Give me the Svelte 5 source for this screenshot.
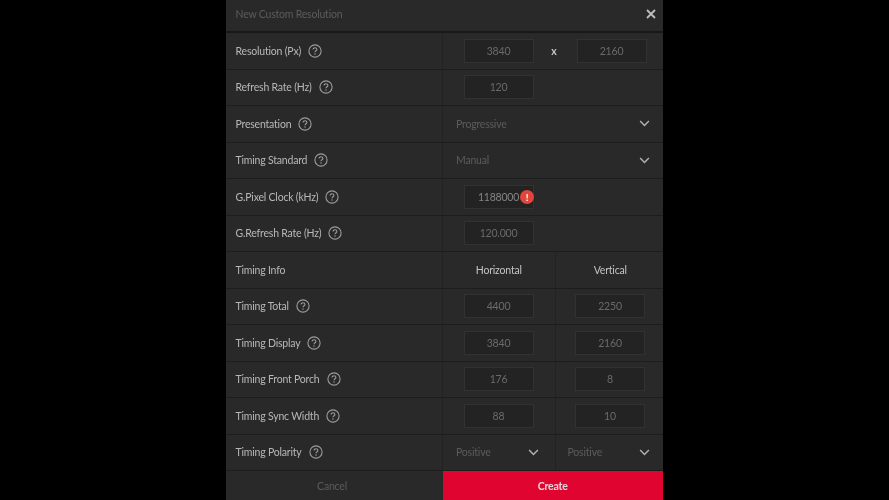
<script>
  const rows = [
    { label: 'Resolution (Px)', help: true, cols: 'res', a: '3840', b: '2160' },
    { label: 'Refresh Rate (Hz)', help: true, cols: 'one', a: '120' },
    { label: 'Presentation', help: true, cols: 'sel', a: 'Progressive' },
    { label: 'Timing Standard', help: true, cols: 'sel', a: 'Manual' },
    { label: 'G.Pixel Clock (kHz)', help: true, cols: 'one', a: '1188000', err: true },
    { label: 'G.Refresh Rate (Hz)', help: true, cols: 'one', a: '120.000' },
    { label: 'Timing Info', cols: 'head', a: 'Horizontal', b: 'Vertical' },
    { label: 'Timing Total', help: true, cols: 'two', a: '4400', b: '2250' },
    { label: 'Timing Display', help: true, cols: 'two', a: '3840', b: '2160' },
    { label: 'Timing Front Porch', help: true, cols: 'two', a: '176', b: '8' },
    { label: 'Timing Sync Width', help: true, cols: 'two', a: '88', b: '10' },
    { label: 'Timing Polarity', help: true, cols: 'two-sel', a: 'Positive', b: 'Positive' }
  ];
</script>

{#snippet chevron()}
  <svg class="chev" viewBox="0 0 12 8" width="11" height="7"><path d="M1 1.2 6 6.2 11 1.2" fill="none" stroke="#b4b4b4" stroke-width="1.6"/></svg>
{/snippet}

{#snippet help()}
  <svg class="help" viewBox="0 0 14 14" width="14" height="14">
    <circle cx="7" cy="7" r="6.1" fill="none" stroke="#9c9c9c" stroke-width="1.1"/>
    <path d="M5.1 5.5C5.1 4.4 6 3.8 7 3.8S8.9 4.4 8.9 5.4C8.9 6.7 7 6.8 7 8.3" fill="none" stroke="#9c9c9c" stroke-width="1.1"/>
    <circle cx="7" cy="10.1" r=".75" fill="#9c9c9c"/>
  </svg>
{/snippet}

<div class="stage">
  <div class="panel">
    <header class="title">
      <span>New Custom Resolution</span>
      <svg viewBox="0 0 10 10" width="10" height="10"><path d="M1 1 9 9M9 1 1 9" stroke="#bdbdbd" stroke-width="1.8"/></svg>
    </header>
    {#each rows as r}
      <div class="row">
        <div class="label"><span>{r.label}</span>{#if r.help}{@render help()}{/if}</div>
        {#if r.cols === 'res'}
          <div class="cell res">
            <div class="input">{r.a}</div><span class="x">x</span><div class="input">{r.b}</div>
          </div>
        {:else if r.cols === 'one'}
          <div class="cell single">
            <div class="input" class:bright={r.err}>
              {r.a}
              {#if r.err}<span class="err">!</span>{/if}
            </div>
          </div>
        {:else if r.cols === 'sel'}
          <div class="cell select"><span>{r.a}</span>{@render chevron()}</div>
        {:else if r.cols === 'head'}
          <div class="cell half heading">{r.a}</div>
          <div class="cell half heading divided">{r.b}</div>
        {:else if r.cols === 'two'}
          <div class="cell half"><div class="input">{r.a}</div></div>
          <div class="cell half divided"><div class="input">{r.b}</div></div>
        {:else}
          <div class="cell half select"><span>{r.a}</span>{@render chevron()}</div>
          <div class="cell half select divided"><span>{r.b}</span>{@render chevron()}</div>
        {/if}
      </div>
    {/each}
    <footer class="actions">
      <div class="cancel">Cancel</div>
      <div class="create">Create</div>
    </footer>
  </div>
</div>

<style>
  :global(body) { margin: 0; background: #000; }
  .stage { width: 889px; height: 500px; overflow: hidden; display: flex; justify-content: center; background: #000; }
  .panel {
    width: 436.5px; height: 500px; margin-left: -0.5px; background: #292929; display: flex; flex-direction: column;
    font-family: Lato, "Open Sans", sans-serif; font-size: 10.5px; letter-spacing: -0.2px; color: #b8b8b8;
    filter: blur(0.55px);
  }
  .title {
    height: 33px; box-sizing: border-box; flex: none; display: flex; align-items: center; justify-content: space-between;
    padding: 0 7px 3px 9.5px; color: #5c5c5c; border-bottom: 2px solid #181818;
  }
  .row { height: 36.5px; box-sizing: border-box; flex: none; display: flex; border-bottom: 1.5px solid #1d1d1d; }
  .label { width: 217px; box-sizing: border-box; padding-left: 9.5px; display: flex; align-items: center; gap: 7px; border-right: 1px solid #222; }
  .cell { flex: 1; box-sizing: border-box; display: flex; align-items: center; min-width: 0; }
  .res, .single { padding-left: 20.5px; }
  .half { flex: none; width: 111.5px; padding-left: 20.5px; }
  .half.divided { width: 107.5px; border-left: 1px solid #222; padding-left: 19.5px; }
  .input {
    width: 70px; height: 24px; box-sizing: border-box; background: #232323; border: 1px solid #323232;
    display: flex; align-items: center; justify-content: center; color: #6a6a6a; position: relative;
  }
  .input.bright { color: #858585; }
  .x { width: 43px; text-align: center; color: #c4c4c4; font-size: 10.5px; font-weight: 700; padding-right: 2px; box-sizing: border-box; }
  .select { justify-content: space-between; padding: 0 13px; color: #5c5c5c; }
  .half.select { padding: 0 16px 0 13px; }
  .half.select.divided { padding: 0 12px 0 12px; }
  .heading { justify-content: center; padding-left: 0; color: #c4c4c4; }
  .half.heading.divided { padding-left: 3px; }
  .err {
    position: absolute; left: 55.5px; top: 4px; width: 14px; height: 14px; border-radius: 50%; background: #e2453b;
    color: #fff; font-size: 10px; font-weight: 700; line-height: 14px; text-align: center;
  }
  .chev, .help { flex: none; }
  .actions { flex: 1; display: flex; }
  .cancel { width: 217px; box-sizing: border-box; padding-right: 5px; display: flex; align-items: center; justify-content: center; color: #5c5c5c; }
  .create { flex: 1; display: flex; align-items: center; justify-content: center; background: #e00530; color: #e6d8da; font-weight: 700; }
</style>
